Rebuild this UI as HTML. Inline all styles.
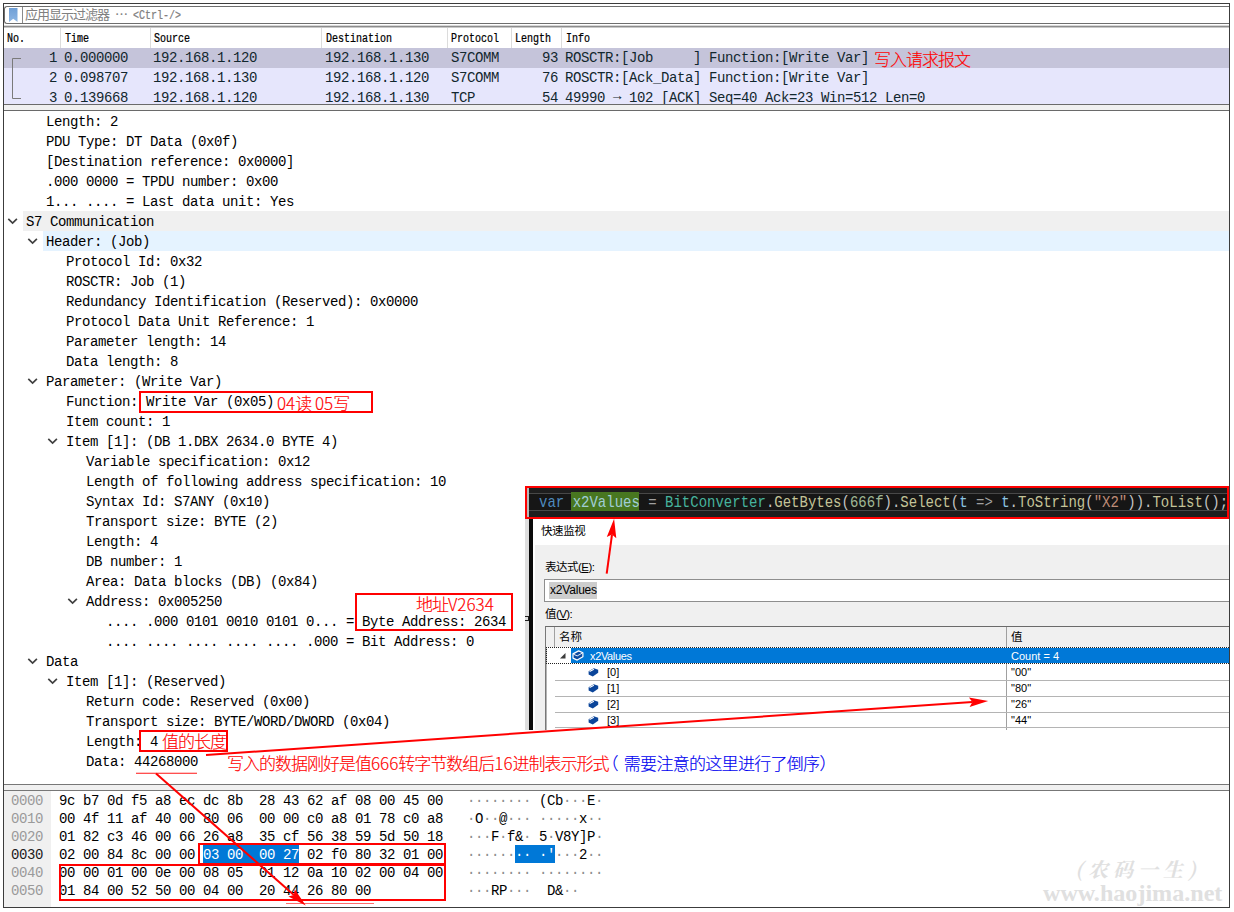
<!DOCTYPE html>
<html lang="zh-CN">
<head>
<meta charset="utf-8">
<title>Wireshark S7COMM Write Var</title>
<style>
*{box-sizing:border-box;margin:0;padding:0}
html,body{width:1234px;height:912px;overflow:hidden;background:#fff}
body{position:relative;font-family:"Liberation Sans","Noto Sans CJK SC",sans-serif;color:#000}
.a{position:absolute}
.m{font-family:"Liberation Mono","DejaVu Sans Mono",monospace;font-size:14px;letter-spacing:-0.4px;white-space:pre;color:#000}
.frame{left:3px;top:3px;width:1227px;height:905px;border:1px solid #3c3c3c}
.hl{background:#888}
/* filter */
.filter{left:4px;top:6px;width:1225px;height:18px;border:1px solid #6e6e6e;border-right:0;border-radius:3px 0 0 3px;background:#fff}
.ftxt{left:25px;top:7px;font:13px/16px "Liberation Sans","Noto Sans CJK SC",sans-serif;letter-spacing:-1px;color:#808080;white-space:pre}
.ftl{left:133px;top:9px;font:10px/12px "Liberation Mono",monospace;color:#808080;white-space:pre;transform:scale(1,1.2);transform-origin:0 0;-webkit-text-stroke:0.2px #808080}
/* header */
.hd{top:30px;height:16px;font:10px/16px "Liberation Mono",monospace;color:#000;white-space:pre;transform:scale(1,1.2);transform-origin:0 0;-webkit-text-stroke:0.2px #000}
.vs{top:28px;width:1px;height:20px;background:#dcdcdc}
/* packet rows */
.pr{left:4px;width:1225px;height:20px}
.pc{height:20px;line-height:20px;color:#12272e}
/* detail rows */
.dr{left:4px;width:1225px;height:20px}
.dt{height:20px;line-height:20px;margin-top:1px}
.red{color:#f00}
.ann{letter-spacing:-1px;font:17px/20px "Liberation Sans","Noto Sans CJK SC",sans-serif;white-space:pre;font-weight:300;-webkit-text-stroke:0.15px currentColor}
.ann i{font-style:normal;font-family:"Noto Sans CJK SC",sans-serif;font-weight:300;letter-spacing:0}
.rb{border:2px solid #f00}
.code{font:14px/16px "Liberation Mono",monospace;white-space:pre;color:#dcdcdc;transform:scale(1,1.2);transform-origin:0 0;opacity:.88}
.ui{font:11.5px/16px "Liberation Sans","Noto Sans CJK SC",sans-serif;white-space:pre;color:#000}
.g{color:#8c8c8c}
</style>
</head>
<body>
<div class="a frame"></div>
<div class="a filter"></div>
<svg class="a" style="left:9px;top:8px" width="9" height="14" viewBox="0 0 9 14"><defs><linearGradient id="bk" x1="0" y1="0" x2="0" y2="1"><stop offset="0" stop-color="#6f9fd6"/><stop offset="1" stop-color="#8db6e4"/></linearGradient></defs><path d="M0 0H8.5V14L4.25 10.8L0 14Z" fill="url(#bk)"/></svg>
<div class="a" style="left:22px;top:7px;width:1px;height:16px;background:#8a8a8a"></div>
<div class="a ftxt">应用显示过滤器</div>
<div class="a ftxt" style="left:115px;letter-spacing:0">⋯</div>
<div class="a ftl">&lt;Ctrl-/&gt;</div>
<div class="a" style="left:4px;top:25px;width:1225px;height:1px;background:#d8d8d8"></div>
<div class="a" style="left:4px;top:26px;width:1225px;height:1px;background:#8c8c8c"></div>
<div class="a" style="left:4px;top:27px;width:1225px;height:1px;background:#c8c8c8"></div>
<div class="a vs" style="left:60px"></div>
<div class="a vs" style="left:150px"></div>
<div class="a vs" style="left:321px"></div>
<div class="a vs" style="left:447px"></div>
<div class="a vs" style="left:511px"></div>
<div class="a vs" style="left:561px"></div>
<div class="a hd" style="left:7px">No.</div>
<div class="a hd" style="left:65px">Time</div>
<div class="a hd" style="left:154px">Source</div>
<div class="a hd" style="left:326px">Destination</div>
<div class="a hd" style="left:451px">Protocol</div>
<div class="a hd" style="left:515px">Length</div>
<div class="a hd" style="left:566px">Info</div>
<div class="a pr" style="top:48px;height:20px;background:#c5c4da;overflow:hidden">
<div class="a m pc" style="left:0;width:53px;text-align:right">1</div>
<div class="a m pc" style="left:60px">0.000000</div>
<div class="a m pc" style="left:149px">192.168.1.120</div>
<div class="a m pc" style="left:321px">192.168.1.130</div>
<div class="a m pc" style="left:447px">S7COMM</div>
<div class="a m pc" style="left:508px;width:46px;text-align:right">93</div>
<div class="a m pc" style="left:561px">ROSCTR:[Job     ] Function:[Write Var]</div>
</div>
<div class="a pr" style="top:68px;height:20px;background:#e6e6fc;overflow:hidden">
<div class="a m pc" style="left:0;width:53px;text-align:right">2</div>
<div class="a m pc" style="left:60px">0.098707</div>
<div class="a m pc" style="left:149px">192.168.1.130</div>
<div class="a m pc" style="left:321px">192.168.1.120</div>
<div class="a m pc" style="left:447px">S7COMM</div>
<div class="a m pc" style="left:508px;width:46px;text-align:right">76</div>
<div class="a m pc" style="left:561px">ROSCTR:[Ack_Data] Function:[Write Var]</div>
</div>
<div class="a pr" style="top:88px;height:16px;background:#e6e6fc;overflow:hidden">
<div class="a m pc" style="left:0;width:53px;text-align:right">3</div>
<div class="a m pc" style="left:60px">0.139668</div>
<div class="a m pc" style="left:149px">192.168.1.120</div>
<div class="a m pc" style="left:321px">192.168.1.130</div>
<div class="a m pc" style="left:447px">TCP</div>
<div class="a m pc" style="left:508px;width:46px;text-align:right">54</div>
<div class="a m pc" style="left:561px">49990 <span style="position:relative;top:-2px">→</span> 102 [ACK] Seq=40 Ack=23 Win=512 Len=0</div>
</div>
<svg class="a" style="left:10px;top:56px" width="14" height="46" viewBox="0 0 14 46"><path d="M11 2.5H2.5V42.5H11" fill="none" stroke="#7a7a7a" stroke-width="1"/></svg>
<div class="a ann red" style="left:874px;top:51px">写入请求报文</div>
<div class="a" style="left:4px;top:104px;width:1225px;height:7px;background:#f0f0f0;border-top:1px solid #6a6a6a;border-bottom:1px solid #6a6a6a"></div>
<div class="a m dt" style="left:46px;top:111px">Length: 2</div>
<div class="a m dt" style="left:46px;top:131px">PDU Type: DT Data (0x0f)</div>
<div class="a m dt" style="left:46px;top:151px">[Destination reference: 0x0000]</div>
<div class="a m dt" style="left:46px;top:171px">.000 0000 = TPDU number: 0x00</div>
<div class="a m dt" style="left:46px;top:191px">1... .... = Last data unit: Yes</div>
<div class="a" style="left:23px;top:211px;width:1206px;height:20px;background:#f0f0f0"></div>
<svg class="a" style="left:7px;top:217px" width="11" height="8" viewBox="0 0 11 8"><path d="M1.3 1.8L5.6 6L9.9 1.8" fill="none" stroke="#404040" stroke-width="1.7"/></svg>
<div class="a m dt" style="left:26px;top:211px">S7 Communication</div>
<div class="a" style="left:43px;top:231px;width:1186px;height:20px;background:#e5f3ff"></div>
<svg class="a" style="left:27px;top:237px" width="11" height="8" viewBox="0 0 11 8"><path d="M1.3 1.8L5.6 6L9.9 1.8" fill="none" stroke="#404040" stroke-width="1.7"/></svg>
<div class="a m dt" style="left:46px;top:231px">Header: (Job)</div>
<div class="a m dt" style="left:66px;top:251px">Protocol Id: 0x32</div>
<div class="a m dt" style="left:66px;top:271px">ROSCTR: Job (1)</div>
<div class="a m dt" style="left:66px;top:291px">Redundancy Identification (Reserved): 0x0000</div>
<div class="a m dt" style="left:66px;top:311px">Protocol Data Unit Reference: 1</div>
<div class="a m dt" style="left:66px;top:331px">Parameter length: 14</div>
<div class="a m dt" style="left:66px;top:351px">Data length: 8</div>
<svg class="a" style="left:27px;top:377px" width="11" height="8" viewBox="0 0 11 8"><path d="M1.3 1.8L5.6 6L9.9 1.8" fill="none" stroke="#404040" stroke-width="1.7"/></svg>
<div class="a m dt" style="left:46px;top:371px">Parameter: (Write Var)</div>
<div class="a m dt" style="left:66px;top:391px">Function: Write Var (0x05)</div>
<div class="a m dt" style="left:66px;top:411px">Item count: 1</div>
<svg class="a" style="left:47px;top:437px" width="11" height="8" viewBox="0 0 11 8"><path d="M1.3 1.8L5.6 6L9.9 1.8" fill="none" stroke="#404040" stroke-width="1.7"/></svg>
<div class="a m dt" style="left:66px;top:431px">Item [1]: (DB 1.DBX 2634.0 BYTE 4)</div>
<div class="a m dt" style="left:86px;top:451px">Variable specification: 0x12</div>
<div class="a m dt" style="left:86px;top:471px">Length of following address specification: 10</div>
<div class="a m dt" style="left:86px;top:491px">Syntax Id: S7ANY (0x10)</div>
<div class="a m dt" style="left:86px;top:511px">Transport size: BYTE (2)</div>
<div class="a m dt" style="left:86px;top:531px">Length: 4</div>
<div class="a m dt" style="left:86px;top:551px">DB number: 1</div>
<div class="a m dt" style="left:86px;top:571px">Area: Data blocks (DB) (0x84)</div>
<svg class="a" style="left:67px;top:597px" width="11" height="8" viewBox="0 0 11 8"><path d="M1.3 1.8L5.6 6L9.9 1.8" fill="none" stroke="#404040" stroke-width="1.7"/></svg>
<div class="a m dt" style="left:86px;top:591px">Address: 0x005250</div>
<div class="a m dt" style="left:106px;top:611px">.... .000 0101 0010 0101 0... = Byte Address: 2634</div>
<div class="a m dt" style="left:106px;top:631px">.... .... .... .... .... .000 = Bit Address: 0</div>
<svg class="a" style="left:27px;top:657px" width="11" height="8" viewBox="0 0 11 8"><path d="M1.3 1.8L5.6 6L9.9 1.8" fill="none" stroke="#404040" stroke-width="1.7"/></svg>
<div class="a m dt" style="left:46px;top:651px">Data</div>
<svg class="a" style="left:47px;top:677px" width="11" height="8" viewBox="0 0 11 8"><path d="M1.3 1.8L5.6 6L9.9 1.8" fill="none" stroke="#404040" stroke-width="1.7"/></svg>
<div class="a m dt" style="left:66px;top:671px">Item [1]: (Reserved)</div>
<div class="a m dt" style="left:86px;top:691px">Return code: Reserved (0x00)</div>
<div class="a m dt" style="left:86px;top:711px">Transport size: BYTE/WORD/DWORD (0x04)</div>
<div class="a m dt" style="left:86px;top:731px">Length: 4</div>
<div class="a m dt" style="left:86px;top:751px">Data: 44268000</div>
<div class="a" style="left:4px;top:784px;width:1225px;height:7px;background:#f0f0f0;border-top:1px solid #777;border-bottom:1px solid #777"></div>
<div class="a" style="left:4px;top:791px;width:47px;height:116px;background:#f0f0f0"></div>
<div class="a" style="left:203px;top:845px;width:96px;height:18px;background:#0078d7"></div>
<div class="a" style="left:515px;top:845px;width:40px;height:18px;background:#0078d7"></div>
<div class="a m" style="left:11px;top:792px;line-height:18px;color:#9a9a9a">0000</div>
<div class="a m" style="left:59px;top:792px;line-height:18px">9c b7 0d f5 a8 ec dc 8b  28 43 62 af 08 00 45 00</div>
<div class="a m" style="left:467px;top:792px;line-height:18px"><span class="g">········</span> (Cb<span class="g">···</span>E<span class="g">·</span></div>
<div class="a m" style="left:11px;top:810px;line-height:18px;color:#9a9a9a">0010</div>
<div class="a m" style="left:59px;top:810px;line-height:18px">00 4f 11 af 40 00 80 06  00 00 c0 a8 01 78 c0 a8</div>
<div class="a m" style="left:467px;top:810px;line-height:18px"><span class="g">·</span>O<span class="g">··</span>@<span class="g">···</span> <span class="g">·····</span>x<span class="g">··</span></div>
<div class="a m" style="left:11px;top:828px;line-height:18px;color:#9a9a9a">0020</div>
<div class="a m" style="left:59px;top:828px;line-height:18px">01 82 c3 46 00 66 26 a8  35 cf 56 38 59 5d 50 18</div>
<div class="a m" style="left:467px;top:828px;line-height:18px"><span class="g">···</span>F<span class="g">·</span>f&amp;<span class="g">·</span> 5<span class="g">·</span>V8Y]P<span class="g">·</span></div>
<div class="a m" style="left:11px;top:846px;line-height:18px;color:#1a1a1a">0030</div>
<div class="a m" style="left:59px;top:846px;line-height:18px">02 00 84 8c 00 00 <span style="color:#fff">03 00  00 27</span> 02 f0 80 32 01 00</div>
<div class="a m" style="left:467px;top:846px;line-height:18px"><span class="g">······</span><span style="color:#fff">·· ·'</span><span class="g">···</span>2<span class="g">··</span></div>
<div class="a m" style="left:11px;top:864px;line-height:18px;color:#9a9a9a">0040</div>
<div class="a m" style="left:59px;top:864px;line-height:18px">00 00 01 00 0e 00 08 05  01 12 0a 10 02 00 04 00</div>
<div class="a m" style="left:467px;top:864px;line-height:18px"><span class="g">········</span> <span class="g">········</span></div>
<div class="a m" style="left:11px;top:882px;line-height:18px;color:#9a9a9a">0050</div>
<div class="a m" style="left:59px;top:882px;line-height:18px">01 84 00 52 50 00 04 00  20 44 26 80 00</div>
<div class="a m" style="left:467px;top:882px;line-height:18px"><span class="g">···</span>RP<span class="g">···</span>  D&amp;<span class="g">··</span></div>
<div class="a rb" style="left:198px;top:843px;width:248px;height:22px"></div>
<div class="a rb" style="left:59px;top:864px;width:387px;height:37px"></div>
<div class="a" style="left:286px;top:903px;width:88px;height:1px;background:#ff6a6a"></div>
<div class="a rb" style="left:139px;top:391px;width:234px;height:22px"></div>
<div class="a ann red" style="left:277px;top:393px"><i>04</i>读 <i>05</i>写</div>
<div class="a rb" style="left:355px;top:593px;width:158px;height:38px"></div>
<div class="a ann red" style="left:416px;top:594px">地址<i>V2634</i></div>
<div class="a rb" style="left:139px;top:730px;width:89px;height:22px"></div>
<div class="a ann red" style="left:162px;top:733px;text-decoration:underline;text-underline-offset:2px">值的长度</div>
<div class="a" style="left:136px;top:772px;width:61px;height:1px;background:#ffc4c4"></div>
<div class="a" style="left:136px;top:773px;width:61px;height:1px;background:#ff5050"></div>
<div class="a ann red" style="left:227px;top:753px">写入的数据刚好是值<i>666</i>转字节数组后<i>16</i>进制表示形式<span style="color:#0000f0;margin-left:-1px;letter-spacing:-.7px"><span style="margin-left:-6px;margin-right:6px">（</span>需要注意的这里进行了倒序）</span></div>
<div class="a" style="left:525px;top:518px;width:704px;height:212px;background:#fff"></div>
<div class="a" style="left:525px;top:518px;width:4px;height:212px;background:#dedede"></div>
<div class="a" style="left:529px;top:518px;width:4px;height:212px;background:#0a0a0a"></div>
<div class="a" style="left:525px;top:616px;width:4px;height:5px;border:1px solid #222;border-left:0"></div>
<div class="a" style="left:535px;top:545px;width:694px;height:185px;background:#f0f0f0"></div>
<div class="a ui" style="left:541px;top:523px;letter-spacing:-.4px">快速监视</div>
<div class="a ui" style="left:545px;top:559px;letter-spacing:-.5px">表达式(<u>E</u>):</div>
<div class="a" style="left:544px;top:579px;width:685px;height:23px;background:#fff;border:1px solid #8e8e8e;border-right:0"></div>
<div class="a" style="left:549px;top:582px;width:48px;height:17px;background:#cdcdcd"></div>
<div class="a ui" style="left:550px;top:582px;font-size:12px;letter-spacing:-.2px">x2Values</div>
<div class="a ui" style="left:545px;top:606px;letter-spacing:-.6px">值(<u>V</u>):</div>
<div class="a" style="left:545px;top:626px;width:684px;height:104px;background:#fff;border-left:1px solid #787878;border-top:1px solid #6a6a6a"></div>
<div class="a" style="left:546px;top:627px;width:1px;height:103px;background:#b4b4b4"></div>
<div class="a" style="left:546px;top:627px;width:683px;height:20px;background:#f0f0f0"></div>
<div class="a" style="left:554px;top:627px;width:1px;height:20px;background:#a0a0a0"></div>
<div class="a" style="left:1006px;top:627px;width:1px;height:103px;background:#a0a0a0"></div>
<div class="a ui" style="left:559px;top:629px">名称</div>
<div class="a ui" style="left:1011px;top:629px">值</div>
<div class="a" style="left:546px;top:647px;width:683px;height:17px;border-top:1px dotted #222;border-bottom:1px dotted #222"></div>
<div class="a" style="left:546px;top:647px;width:25px;height:17px;border-left:1px dotted #222"></div>
<div class="a" style="left:571px;top:648px;width:658px;height:15px;background:#0078d7"></div>
<svg class="a" style="left:559px;top:652px" width="8" height="8" viewBox="0 0 8 8"><path d="M6.5 1V6.5H1Z" fill="#3c3c3c"/></svg>
<svg class="a" style="left:572px;top:650px" width="12" height="11" viewBox="0 0 12 11"><path d="M1 3.9L6.6 .9L10.9 2.7V6.7L5.2 10.1L1 8.1Z" fill="#0b4aa0" stroke="#fff" stroke-width="1.2" stroke-linejoin="round"/><path d="M1.5 4.2L5.2 5.9L10.5 3" fill="none" stroke="#fff" stroke-width=".9"/></svg>
<div class="a ui" style="left:590px;top:648px;color:#fff;font-size:11px;letter-spacing:-.35px">x2Values</div>
<div class="a ui" style="left:1011px;top:648px;color:#fff;font-size:11px">Count = 4</div>
<div class="a" style="left:555px;top:680px;width:674px;height:1px;background:#b4b4b4"></div>
<svg class="a" style="left:588px;top:666.6px" width="11" height="11" viewBox="0 0 11 11"><path d="M.6 4.2L5.8 1.2L10.2 2.8V5.8L4.8 9.4L.6 7.4Z" fill="#0b459a"/><path d="M1.6 4.5L5.9 2.2" fill="none" stroke="#fff" stroke-width="1.1"/></svg>
<div class="a ui" style="left:607px;top:664px;font-size:11px">[0]</div>
<div class="a ui" style="left:1011px;top:664px;font-size:11px">"00"</div>
<div class="a" style="left:555px;top:696px;width:674px;height:1px;background:#b4b4b4"></div>
<svg class="a" style="left:588px;top:682.6px" width="11" height="11" viewBox="0 0 11 11"><path d="M.6 4.2L5.8 1.2L10.2 2.8V5.8L4.8 9.4L.6 7.4Z" fill="#0b459a"/><path d="M1.6 4.5L5.9 2.2" fill="none" stroke="#fff" stroke-width="1.1"/></svg>
<div class="a ui" style="left:607px;top:680px;font-size:11px">[1]</div>
<div class="a ui" style="left:1011px;top:680px;font-size:11px">"80"</div>
<div class="a" style="left:555px;top:712px;width:674px;height:1px;background:#b4b4b4"></div>
<svg class="a" style="left:588px;top:698.6px" width="11" height="11" viewBox="0 0 11 11"><path d="M.6 4.2L5.8 1.2L10.2 2.8V5.8L4.8 9.4L.6 7.4Z" fill="#0b459a"/><path d="M1.6 4.5L5.9 2.2" fill="none" stroke="#fff" stroke-width="1.1"/></svg>
<div class="a ui" style="left:607px;top:696px;font-size:11px">[2]</div>
<div class="a ui" style="left:1011px;top:696px;font-size:11px">"26"</div>
<div class="a" style="left:555px;top:727px;width:674px;height:1px;background:#b4b4b4"></div>
<svg class="a" style="left:588px;top:714.6px" width="11" height="11" viewBox="0 0 11 11"><path d="M.6 4.2L5.8 1.2L10.2 2.8V5.8L4.8 9.4L.6 7.4Z" fill="#0b459a"/><path d="M1.6 4.5L5.9 2.2" fill="none" stroke="#fff" stroke-width="1.1"/></svg>
<div class="a ui" style="left:607px;top:712px;font-size:11px">[3]</div>
<div class="a ui" style="left:1011px;top:712px;font-size:11px">"44"</div>
<div class="a" style="left:525px;top:486px;width:704px;height:33px;background:#1e1e1e;border:2px solid #f00"></div>
<div class="a" style="left:527px;top:488px;width:2px;height:29px;background:#b8b8b8"></div>
<div class="a" style="left:529px;top:493px;width:698px;height:18px;background:#161616;border-top:1px solid #484848;border-bottom:1px solid #484848"></div>
<div class="a" style="left:571px;top:492px;width:68px;height:19px;background:#487720"></div>
<div class="a code" style="left:539px;top:493px"><span style="color:#569cd6">var</span> <span style="color:#aedbee">x2Values</span> <span style="color:#b4b4b4">=</span> <span style="color:#4ec9b0">BitConverter</span>.<span style="color:#dcdcaa">GetBytes</span>(<span style="color:#b5cea8">666f</span>).<span style="color:#dcdcaa">Select</span>(<span style="color:#9cdcfe">t</span> <span style="color:#b4b4b4">=&gt;</span> <span style="color:#9cdcfe">t</span>.<span style="color:#dcdcaa">ToString</span>(<span style="color:#d69d85">"X2"</span>)).<span style="color:#dcdcaa">ToList</span>();</div>
<svg class="a" style="left:0;top:0;pointer-events:none" width="1234" height="912" viewBox="0 0 1234 912">
<line x1="206.0" y1="755.0" x2="972.4" y2="702.0" stroke="#f00" stroke-width="2"/><path d="M988.2 700.9L969.6 707.0L972.4 702.0L968.9 697.4Z" fill="#f00"/>
<line x1="156.0" y1="773.5" x2="293.9" y2="895.0" stroke="#f00" stroke-width="2"/><path d="M305.8 905.4L288.4 896.4L293.9 895.0L294.7 889.2Z" fill="#f00"/>
<line x1="606.7" y1="573.6" x2="612.0" y2="534.5" stroke="#f00" stroke-width="2"/><path d="M614.1 518.8L616.3 538.3L612.0 534.5L606.8 537.0Z" fill="#f00"/>
</svg>
<div class="a" style="left:1075px;top:857px;font:italic bold 20px/24px &quot;Noto Serif CJK SC&quot;,serif;color:#e0e0e0;letter-spacing:5px;white-space:pre">(农码一生)</div>
<div class="a" style="left:1043px;top:878px;font:bold 24.1px/30px &quot;Liberation Serif&quot;,serif;color:#e0e0e0;white-space:pre">www.haojima.net</div>
</body>
</html>
